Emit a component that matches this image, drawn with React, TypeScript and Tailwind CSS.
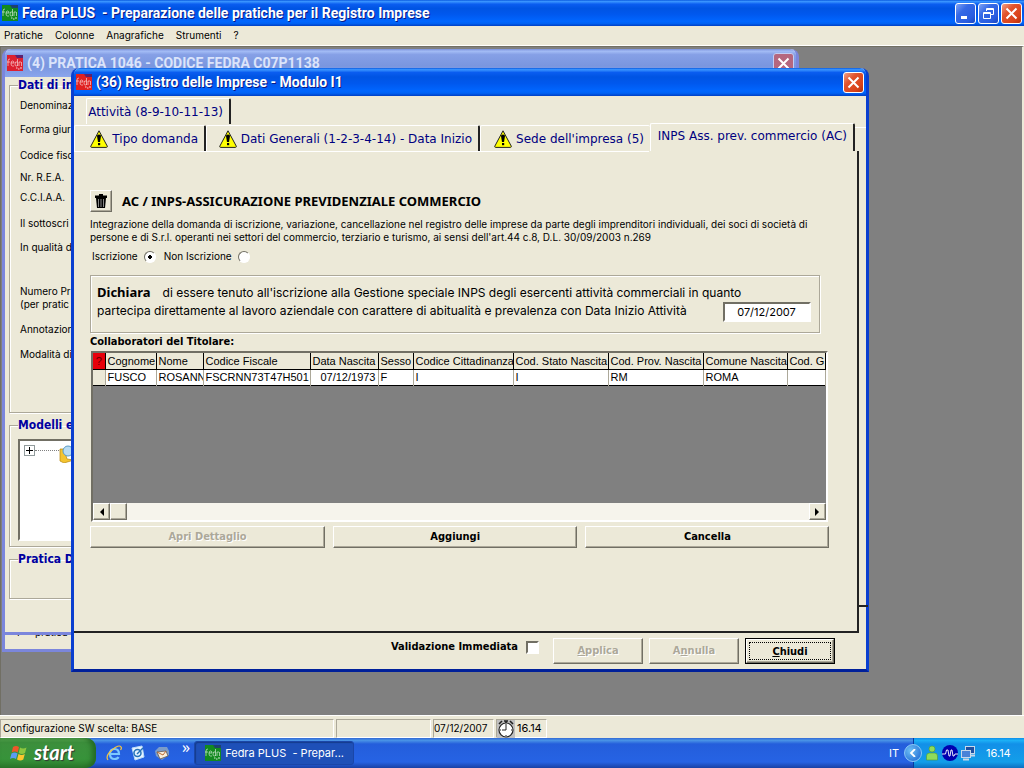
import type { ReactNode } from "react";

const small = "font-['Inter',sans-serif] text-[10px] leading-[13px]";
const raised =
  "border border-t-white border-l-white border-r-[#716f64] border-b-[#716f64] bg-[#ece9d8] shadow-[inset_-1px_-1px_0_#aca899]";
const sunken = "border-2 border-t-[#716f64] border-r-white border-b-white border-l-[#716f64]";
const etched = "border border-[#aca899] shadow-[1px_1px_0_#fff,inset_1px_1px_0_#fff]";
const legendText = "h-4 font-['DejaVu_Sans_Condensed',sans-serif] text-xs leading-4 font-bold text-[#0000a0]";
const titleText =
  "font-['Roboto',sans-serif] text-sm font-bold whitespace-pre text-white [text-shadow:1px_1px_0_#0a1883]";
const activeBar =
  "bg-[linear-gradient(180deg,#0a5be0_0%,#3a95ff_6%,#0a5df0_16%,#0054e3_32%,#0058ee_55%,#0066ff_82%,#0062f4_90%,#003fc4_100%)]";
const inactiveBar =
  "bg-[linear-gradient(180deg,#7a90dc_0%,#a3bcf5_8%,#86a0e6_20%,#7a96df_60%,#8aa5ec_100%)]";

const columns = [
  { name: "Cognome", width: "w-[51px]", value: "FUSCO" },
  { name: "Nome", width: "w-[47px]", value: "ROSANN" },
  { name: "Codice Fiscale", width: "w-[107px]", value: "FSCRNN73T47H501" },
  { name: "Data Nascita", width: "w-[68px]", value: "07/12/1973", right: true },
  { name: "Sesso", width: "w-[35px]", value: "F" },
  { name: "Codice Cittadinanza", width: "w-[100px]", value: "I" },
  { name: "Cod. Stato Nascita", width: "w-[95px]", value: "I" },
  { name: "Cod. Prov. Nascita", width: "w-[95px]", value: "RM" },
  { name: "Comune Nascita", width: "w-[84px]", value: "ROMA" },
  { name: "Cod. G", width: "w-[38px]", value: "" },
];

const caseLabels = [
  { text: "Denominaz", row: "h-6" },
  { text: "Forma giur", row: "h-6" },
  { text: "Codice fisc", row: "h-7" },
  { text: "Nr. R.E.A.", row: "h-4" },
  { text: "C.C.I.A.A.", row: "h-6" },
  { text: "Il sottoscri", row: "h-7" },
  { text: "In qualità d", row: "h-5" },
];

function FedraIcon({ color }: { color: string }) {
  return (
    <svg viewBox="0 0 16 16" className="size-4 shrink-0" aria-hidden="true">
      <rect width="16" height="16" fill={color} />
      <path d="M8 0h8v3H10z" fill="#23238f" opacity=".7" />
      <path
        d="M1 11V6q0-2 2-2M0 7h3M4 8h3q0-2-1.500-2T4 8.500 5.500 11H7M10.500 4v7M10.500 7Q8 6 8 9t2.500 1.500M12 11V7h2M14.500 11V7"
        fill="none"
        stroke="#fff"
        strokeOpacity=".7"
        strokeWidth=".8"
      />
      <path d="M9 13h1.500M11 14h1.500M13 13h2" stroke="#fff" strokeOpacity=".8" />
    </svg>
  );
}

function WarningIcon() {
  return (
    <svg viewBox="0 0 18 18" className="size-[18px] shrink-0" aria-hidden="true">
      <path d="M9 .8 17.300 16.200Q17.500 17.300 16.500 17.400H1.500Q.5 17.300.8 16.200Z" fill="#ff0" stroke="#222" />
      <path d="M7 6q0-1.500 2-1.500T11 6L10 12H8z" fill="#000" />
      <rect x="8" y="13" width="2.200" height="2.200" fill="#000" />
    </svg>
  );
}

function CloseButton({ faded = false }: { faded?: boolean }) {
  return (
    <button
      type="button"
      aria-label="Chiudi finestra"
      className={
        faded
          ? "grid size-[21px] place-items-center rounded-[3px] border border-[#c3cdf3] bg-[#b5677f]"
          : "grid size-[21px] place-items-center rounded-[3px] border border-white bg-[linear-gradient(135deg,#f0a088_0%,#e2532d_35%,#d9431a_75%,#b5300c_100%)]"
      }
    >
      <svg viewBox="0 0 13 13" className="size-[13px]" aria-hidden="true">
        <path d="m1.500 1.500 10 10M11.500 1.500l-10 10" stroke="#fff" strokeWidth="2" />
      </svg>
    </button>
  );
}

function CaptionButton({ label, children }: { label: string; children: ReactNode }) {
  return (
    <button
      type="button"
      aria-label={label}
      className="grid size-[21px] place-items-center rounded-[3px] border border-white bg-[linear-gradient(135deg,#7fa3f5_0%,#3569e6_35%,#2a5de0_75%,#1a47c0_100%)]"
    >
      <svg viewBox="0 0 15 15" className="size-[15px]" fill="none" stroke="#fff" aria-hidden="true">
        {children}
      </svg>
    </button>
  );
}

type TabProps = { children: ReactNode; width: string; warn?: boolean; edge?: string; active?: boolean };

function Tab({ children, width, warn = false, edge = "border-r-2 border-r-[#222]", active = false }: TabProps) {
  return (
    <button
      type="button"
      role="tab"
      aria-selected={active}
      className={`${width} ${edge} ${active ? "h-7 pb-1" : "h-[26px]"} flex items-center justify-end gap-1 rounded-t-[2px] border-t border-l border-t-white border-l-white pr-1.5 font-['DejaVu_Sans',sans-serif] text-xs whitespace-nowrap text-[#000080]`}
    >
      {warn && <WarningIcon />}
      <span>{children}</span>
    </button>
  );
}

function PushButton({ children, disabled = false, className = "" }: { children: ReactNode; disabled?: boolean; className?: string }) {
  return (
    <button
      type="button"
      disabled={disabled}
      className={`${raised} font-['DejaVu_Sans_Condensed',sans-serif] text-[11px] font-bold text-black disabled:text-[#aca899] disabled:[text-shadow:1px_1px_0_#fff] ${className}`}
    >
      {children}
    </button>
  );
}

function CaseWindow() {
  return (
    <>
      <section className="absolute top-[22px] left-px flex h-[583px] w-[797px] flex-col justify-end border-3 border-[#7b86dc] bg-[#ece9d8] pb-2.5 pl-3">
        <div className={`${small} flex gap-3`}>
          <span>F</span>
          <span>pratica f</span>
        </div>
      </section>
      <section className="absolute top-0.5 left-px flex h-[586px] w-[797px] flex-col rounded-t-lg border-r-3 border-b-3 border-l-3 border-[#7b86dc] bg-[#ece9d8]">
        <header className={`flex h-7 shrink-0 items-center gap-1 rounded-t-md pr-0.5 pl-0.5 ${inactiveBar}`}>
          <FedraIcon color="#dc2030" />
          <h2 className="grow font-['Roboto',sans-serif] text-sm font-bold text-[#dbe4fb]">
            (4) PRATICA 1046 - CODICE FEDRA C07P1138
          </h2>
          <CloseButton faded />
        </header>
        <div className={`${small} flex w-56 flex-col gap-1 px-1 text-black`}>
          <fieldset className={`h-[336px] pl-2 ${etched}`}>
            <legend className={legendText}>Dati di in</legend>
            <div className="pl-0.5">
              {caseLabels.map((label) => (
                <p key={label.text} className={`flex items-center ${label.row}`}>
                  {label.text}
                </p>
              ))}
              <p className="mt-7">Numero Pr</p>
              <p>(per pratic</p>
              <p className="mt-3">Annotazion</p>
              <p className="mt-3">Modalità di</p>
            </div>
          </fieldset>
          <fieldset className={`h-[130px] px-2 ${etched}`}>
            <legend className={legendText}>Modelli e</legend>
            <div className={`mt-1.5 flex h-[102px] items-start bg-white p-1 ${sunken}`}>
              <button
                type="button"
                aria-label="Espandi"
                className="grid size-[11px] shrink-0 place-items-center border border-[#919b9c]"
              >
                <svg viewBox="0 0 7 7" className="size-[7px]" aria-hidden="true">
                  <path d="M0 3.500h7M3.500 0v7" stroke="#000" />
                </svg>
              </button>
              <span className="mt-[5px] w-6 border-t border-dotted border-[#808080]" />
              <svg viewBox="0 0 18 18" className="size-[18px] shrink-0" aria-hidden="true">
                <path d="M1 4h4l3 10 7 1-10 3-4-2z" fill="#f4c430" stroke="#b8860b" strokeWidth=".7" />
                <circle cx="9" cy="6" r="5" fill="#b9dcf2" stroke="#5b9bc4" />
              </svg>
            </div>
          </fieldset>
          <fieldset className={`h-12 pl-2 ${etched}`}>
            <legend className={legendText}>Pratica D</legend>
          </fieldset>
        </div>
      </section>
    </>
  );
}

function CollaboratorsGrid() {
  return (
    <div className={`mr-[29px] ml-px flex h-[171px] flex-col overflow-hidden bg-[#808080] ${sunken}`}>
      <div className="grow overflow-hidden">
        <table className="w-[732px] table-fixed border-collapse font-['Liberation_Sans',sans-serif] text-[11px] leading-[14px]">
          <thead>
            <tr className="h-4 bg-[#ece9d8]">
              <th className="w-3 border-r border-b border-black bg-red-600 p-0 font-normal text-[#600]">?</th>
              {columns.map((column) => (
                <th
                  key={column.name}
                  className={`${column.width} overflow-hidden border-r border-b border-black p-0 pl-0.5 text-left font-normal whitespace-nowrap`}
                >
                  {column.name}
                </th>
              ))}
            </tr>
          </thead>
          <tbody>
            <tr className="h-4 border-b border-black bg-white">
              <td className="border-r border-[#aca899] bg-[#ece9d8] p-0" />
              {columns.map((column) => (
                <td
                  key={column.name}
                  className={`overflow-hidden border-r border-[#aca899] p-0 px-0.5 whitespace-nowrap ${column.right ? "text-right" : ""}`}
                >
                  {column.value}
                </td>
              ))}
            </tr>
          </tbody>
        </table>
      </div>
      <div className="flex h-[17px] shrink-0 bg-[#f6f4ec]">
        <button type="button" aria-label="Scorri a sinistra" className={`${raised} grid w-[17px] place-items-center`}>
          <svg viewBox="0 0 8 8" className="size-2" aria-hidden="true">
            <path d="M6 0v8L2 4z" />
          </svg>
        </button>
        <div className={`${raised} w-[17px]`} />
        <button type="button" aria-label="Scorri a destra" className={`${raised} ml-auto grid w-[17px] place-items-center`}>
          <svg viewBox="0 0 8 8" className="size-2" aria-hidden="true">
            <path d="M2 0v8l4-4z" />
          </svg>
        </button>
      </div>
    </div>
  );
}

function Radio({ label, checked = false }: { label: string; checked?: boolean }) {
  return (
    <label className="flex items-center gap-1.5">
      {label}
      <input
        type="radio"
        name="iscrizione"
        defaultChecked={checked}
        className="size-3 appearance-none rounded-full border border-t-[#716f64] border-r-white border-b-white border-l-[#716f64] bg-white checked:bg-[radial-gradient(circle,#000_0_2px,#fff_2px)]"
      />
    </label>
  );
}

function ModuleWindow() {
  return (
    <section className="absolute top-[21px] left-[70px] flex h-[604px] w-[798px] flex-col rounded-t-lg border-r-3 border-b-3 border-l-3 border-[#0a3fd0] border-b-[#00209a] bg-[#ece9d8]">
      <header className={`flex h-7 shrink-0 items-center gap-1 rounded-t-md pr-0.5 pl-0.5 ${activeBar}`}>
        <FedraIcon color="#e02020" />
        <h2 className={`${titleText} grow`}>(36) Registro delle Imprese - Modulo I1</h2>
        <CloseButton />
      </header>

      <div role="tablist" className="flex shrink-0 flex-col">
        <div className="flex pt-0.5 pl-3">
          <Tab width="w-[145px]">Attività (8-9-10-11-13)</Tab>
        </div>
        <div className="-mt-px flex items-end">
          <Tab warn width="w-[132px]">Tipo domanda</Tab>
          <Tab warn width="w-[274px]">Dati Generali (1-2-3-4-14) - Data Inizio</Tab>
          <Tab warn width="w-[170px]" edge="border-r-0">Sede dell'impresa (5)</Tab>
          <Tab active width="w-[205px]">INPS Ass. prev. commercio (AC)</Tab>
          <div className="h-6 grow border-t border-white" />
        </div>
      </div>

      <div className="flex grow">
        <div className="flex grow flex-col border-r-2 border-b-2 border-r-[#222] border-b-[#222]">
          <div className="mr-52 border-t border-white" />
          <div className="flex flex-col pt-9.5 pl-4">
            <div className="flex items-center gap-2.5">
              <button type="button" aria-label="Elimina" className={`${raised} grid size-[22px] place-items-center`}>
                <svg viewBox="0 0 16 16" className="size-4" aria-hidden="true">
                  <path d="M2 2.500h4V1h4v1.500h4V5H2z" />
                  <path d="M3 5h10l-1 10H4z" />
                  <path d="M5.500 6v8M8 6v8M10.500 6v8" stroke="#aaa" strokeWidth=".8" />
                </svg>
              </button>
              <h3 className="font-['Noto_Sans',sans-serif] text-[13px] leading-4 font-bold">
                AC / INPS-ASSICURAZIONE PREVIDENZIALE COMMERCIO
              </h3>
            </div>
            <p className={`${small} mt-1.5`}>
              Integrazione della domanda di iscrizione, variazione, cancellazione nel registro delle imprese da parte
              degli imprenditori individuali, dei soci di società di
              <br />
              persone e di S.r.l. operanti nei settori del commercio, terziario e turismo, ai sensi dell'art.44 c.8,
              D.L. 30/09/2003 n.269
            </p>
            <div className={`${small} mt-1.5 flex gap-2 pl-0.5`}>
              <Radio label="Iscrizione" checked />
              <Radio label="Non Iscrizione" />
            </div>
            <div className={`mt-3 mr-[37px] flex h-[58px] justify-between pt-2 pr-2 pl-1.5 font-['Inter',sans-serif] text-xs leading-[18px] ${etched}`}>
              <label htmlFor="start-date" className="whitespace-nowrap">
                <b className="mr-3 font-['Noto_Sans',sans-serif] text-[13px] leading-none">Dichiara</b>
                di essere tenuto all'iscrizione alla Gestione speciale INPS degli esercenti attività commerciali in quanto
                <br />
                partecipa direttamente al lavoro aziendale con carattere di abitualità e prevalenza con Data Inizio
                Attività
              </label>
              <input
                id="start-date"
                defaultValue="07/12/2007"
                className={`mt-4.5 -ml-16 h-5 w-[88px] shrink-0 bg-white text-center text-[11px] ${sunken}`}
              />
            </div>
            <h4 className="my-0.5 font-['DejaVu_Sans_Condensed',sans-serif] text-[11px] leading-[14px] font-bold">
              Collaboratori del Titolare:
            </h4>
            <CollaboratorsGrid />
            <div className="mt-1 mr-[27px] grid grid-cols-[234fr_243fr_243fr] gap-2">
              <PushButton disabled className="h-[22px]">Apri Dettaglio</PushButton>
              <PushButton className="h-[22px]">Aggiungi</PushButton>
              <PushButton className="h-[22px]">Cancella</PushButton>
            </div>
          </div>
        </div>
        <div className="mb-[26px] w-[9px] shrink-0 border-b-2 border-[#222]" />
      </div>

      <footer className="flex h-9 shrink-0 items-center justify-end gap-1.5 pr-[31px]">
        <label className="mr-2 flex items-center gap-2 pb-2 font-['DejaVu_Sans_Condensed',sans-serif] text-[11px] font-bold">
          Validazione Immediata
          <input type="checkbox" className={`size-[13px] appearance-none bg-white ${sunken}`} />
        </label>
        <PushButton disabled className="h-[26px] w-[90px]"><u>A</u>pplica</PushButton>
        <PushButton disabled className="h-[26px] w-[90px]">A<u>n</u>nulla</PushButton>
        <div className="flex border border-black">
          <PushButton className="h-6 w-[88px] p-0.5">
            <span className="grid size-full place-items-center border border-dotted border-black leading-none">
              <span><u>C</u>hiudi</span>
            </span>
          </PushButton>
        </div>
      </footer>
    </section>
  );
}

function WindowsFlag() {
  return (
    <svg viewBox="0 0 18 18" className="size-[18px]" aria-hidden="true">
      <path d="M3 3q3-2 6 0L7.700 8.500q-3-2-6 0z" fill="#f0562a" />
      <path d="M10 3.500q3 2 6.500 0L15 9q-3 2-6.300 0z" fill="#8cc63f" />
      <path d="M1.500 9.500q3-2 6 0L6 15q-3-2-6 0z" fill="#5a9cf5" />
      <path d="M8.500 10q3 2 6.300 0l-1.500 5.500q-3 2-6.300 0z" fill="#fcc62e" />
    </svg>
  );
}

function Taskbar() {
  return (
    <footer className="flex h-[30px] shrink-0 items-stretch bg-[linear-gradient(180deg,#3168d5_0%,#4993e6_8%,#245edb_20%,#2663e4_80%,#1941a5_100%)] text-white">
      <button
        type="button"
        className="flex w-24 items-center gap-1.5 rounded-r-[10px] bg-[linear-gradient(180deg,#5eac56_0%,#3c8f3c_15%,#37933a_70%,#2c7a2c_100%)] pl-2.5 font-['Lato',sans-serif] text-xl leading-none font-bold italic shadow-[inset_-4px_0_5px_#246b24] [text-shadow:1px_1px_1px_#333]"
      >
        <WindowsFlag />
        <span className="pb-0.5">start</span>
      </button>
      <nav className="flex items-center gap-2 pl-2.5">
        <a href="#ie" aria-label="Internet Explorer">
          <svg viewBox="0 0 16 16" className="size-4" fill="none" aria-hidden="true">
            <path d="M4 9h9q0-5-4.500-5T4 9q0 5 4.500 5 3 0 4-2" stroke="#7cc8ff" strokeWidth="2.200" />
            <path d="M2 15Q-1 11 6 5t9-3q1 1-.5 3" stroke="#f5c542" strokeWidth="1.200" />
          </svg>
        </a>
        <a href="#outlook" aria-label="Outlook Express">
          <svg viewBox="0 0 16 16" className="size-4" fill="none" aria-hidden="true">
            <path d="M2 3 12 1l2 11-9 3z" fill="#e6f3ff" stroke="#b9dcf8" />
            <circle cx="7.500" cy="8" r="3.500" stroke="#2472b8" strokeWidth="1.500" />
            <path d="m7 9 6-6" stroke="#2472b8" strokeWidth="1.500" />
          </svg>
        </a>
        <a href="#mail" aria-label="Posta">
          <svg viewBox="0 0 16 16" className="size-4" aria-hidden="true">
            <path d="M1 6 5 2h8l2 4v4l-7 5-6-4z" fill="#7b9cc9" />
            <path d="m3 7 9-1 2 5-8 3z" fill="#f8eedd" stroke="#5a4b41" strokeWidth=".7" />
            <path d="m3 7 6 3 3-4" fill="none" stroke="#bb6b32" />
          </svg>
        </a>
        <span className="mb-3 ml-1 text-base leading-none">»</span>
      </nav>
      <button
        type="button"
        className="my-[3px] ml-1 flex w-40 items-center gap-1 rounded-[3px] border border-[#1a46a8] bg-[#1e50b8] pl-2.5 font-['Inter',sans-serif] text-[11px] whitespace-pre shadow-[inset_1px_1px_1px_#143b8c]"
      >
        <FedraIcon color="#128a20" />
        Fedra PLUS  - Prepar...
      </button>
      <div className="ml-auto flex items-center font-['Inter',sans-serif] text-[11px]">
        <span className="pr-3.5">IT</span>
        <div className="flex h-full w-[111px] items-center gap-0.5 border-l border-[#0a3a9c] bg-[linear-gradient(180deg,#0c8dea_0%,#1cb0f6_8%,#1290e8_20%,#139ee9_80%,#0d6fc0_100%)]">
          <button
            type="button"
            aria-label="Mostra icone nascoste"
            className="-ml-2.5 grid size-[18px] place-items-center rounded-full border border-[#8cc8f5] bg-[radial-gradient(circle_at_35%_35%,#6ec0f5,#1560d0)]"
          >
            <svg viewBox="0 0 8 8" className="size-2" aria-hidden="true">
              <path d="M6 0 2 4l4 4" fill="none" stroke="#fff" strokeWidth="1.800" />
            </svg>
          </button>
          <svg viewBox="0 0 16 16" className="size-4" fill="#8fdc5a" stroke="#4f9a30" strokeWidth=".6" aria-hidden="true">
            <circle cx="8" cy="4" r="3" />
            <path d="M2.500 15V11q0-3 3-3h5q3 0 3 3v4z" />
          </svg>
          <svg viewBox="0 0 16 16" className="size-4" aria-hidden="true">
            <circle cx="8" cy="8" r="8" fill="#0000b0" />
            <path d="M0 9h3.500l1-4 1.500 0 1 6h1l1-6h1l1 6h1l1-2h3" fill="none" stroke="#fff" strokeWidth=".9" />
          </svg>
          <svg viewBox="0 0 16 16" className="size-4" stroke="#c8d8ea" aria-hidden="true">
            <rect x="5.500" y="1.500" width="9" height="7" fill="#1f4fa0" />
            <rect x="1.500" y="5.500" width="9" height="7" fill="#4a83d8" />
            <path d="M3 14.500h6M11 10.500h4" strokeWidth="2" />
          </svg>
          <time className="pl-2">16.14</time>
        </div>
      </div>
    </footer>
  );
}

const statusCell = "flex items-center border border-t-[#aca899] border-r-white border-b-white border-l-[#aca899]";

export default function App() {
  return (
    <div className="flex min-h-screen flex-col bg-[#ece9d8] text-black">
      <header className={`flex h-[26px] shrink-0 items-center gap-1 pr-0.5 pl-0.5 ${activeBar}`}>
        <FedraIcon color="#128a20" />
        <h1 className={`${titleText} grow`}>Fedra PLUS  - Preparazione delle pratiche per il Registro Imprese</h1>
        <div className="flex gap-0.5">
          <CaptionButton label="Riduci a icona">
            <path d="M3 11.500h6" strokeWidth="3" />
          </CaptionButton>
          <CaptionButton label="Ripristina">
            <path d="M5.500 5V2.500h7v6H10M5.500 3.500h7M2.500 6.500h7v6h-7zM2.500 7.500h7" />
          </CaptionButton>
          <CloseButton />
        </div>
      </header>
      <nav className="flex h-5 shrink-0 items-center gap-3 border-b border-white pl-1 font-['Inter',sans-serif] text-[10px]">
        <button type="button">Pratiche</button>
        <button type="button">Colonne</button>
        <button type="button">Anagrafiche</button>
        <button type="button">Strumenti</button>
        <button type="button">?</button>
      </nav>

      <main className="relative grow overflow-hidden border-t border-r-2 border-l border-t-[#716f64] border-r-[#ece9d8] border-l-[#716f64] bg-[#808080]">
        <CaseWindow />
        <ModuleWindow />
      </main>

      <div className={`${small} flex h-[23px] shrink-0 items-stretch gap-0.5 border-t border-white pt-[3px]`}>
        <span className={`${statusCell} w-[334px] pl-0.5`}>Configurazione SW scelta: BASE</span>
        <span className={`${statusCell} w-[95px]`} />
        <span className={`${statusCell} w-[61px]`}>07/12/2007</span>
        <span className={`${statusCell} w-[51px] gap-0.5 text-[11px]`}>
          <svg viewBox="0 0 18 18" className="size-[18px] shrink-0 bg-[#c0c0c0]" fill="none" stroke="#222" aria-hidden="true">
            <path d="M2 4 5 1M13 1l3 3M7 1h4M9 1v2" strokeWidth="1.600" />
            <circle cx="9" cy="10" r="7" fill="#fff" strokeWidth="1.200" />
            <path d="M9 5v5H5" />
            <path d="M9 4v1M9 15v1M3 10h1M14 10h1" />
          </svg>
          16.14
        </span>
      </div>
      <Taskbar />
    </div>
  );
}
